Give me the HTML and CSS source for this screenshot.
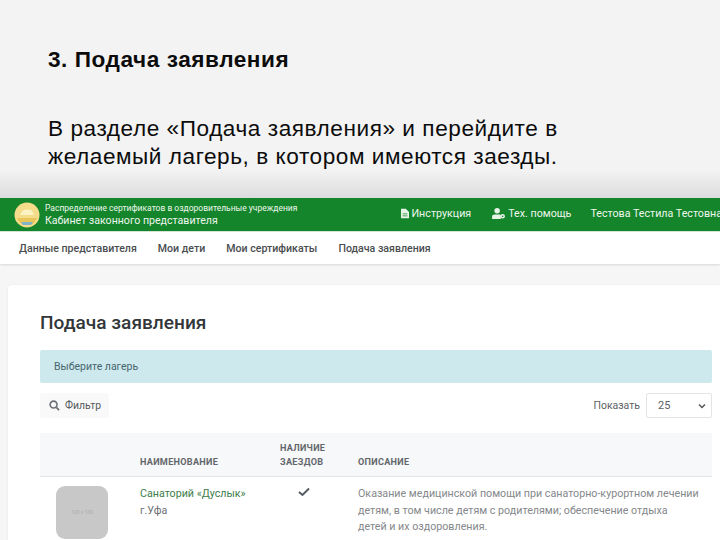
FILE: index.html
```html
<!DOCTYPE html>
<html lang="en">
<head>
  <meta charset="UTF-8">
  <title>Подача заявления</title>
  <link rel="stylesheet" href="styles.css">
</head>
<body>
  <div class="slide">
    <h1 class="slide-title">3. Подача заявления</h1>
    <p class="slide-text">В разделе «Подача заявления» и перейдите в<br>желаемый лагерь, в котором имеются заезды.</p>
  </div>
  <div class="shot">
    <div class="topbar">
      <div class="brand">
        <svg class="logo" viewBox="0 0 26 26">
          <circle cx="13" cy="13" r="12.5" fill="#f3dc8a"/>
          <path d="M6 13 Q10 6 14 8 Q17 6 20 13 Z" fill="#fbf3c4"/>
          <path d="M3 16 H23 Q21 21 17 23 H9 Q5 21 3 16 Z" fill="#e8c65a"/>
          <path d="M7 20 H19 L17 23 H9 Z" fill="#7fb3c9"/>
        </svg>
        <div>
          <div class="brand-sub">Распределение сертификатов в оздоровительные учреждения</div>
          <div class="brand-name">Кабинет законного представителя</div>
        </div>
      </div>
      <div class="top-links">
        <span class="top-link">
          <svg class="ico-doc" viewBox="0 0 10 12"><path d="M0 0 H6 L10 4 V12 H0 Z M2 6 V7 H8 V6 Z M2 8.5 V9.5 H8 V8.5 Z" fill="#e8f3e8" fill-rule="evenodd"/></svg>
          Инструкция
        </span>
        <span class="top-link">
          <svg class="ico-user" viewBox="0 0 14 12"><circle cx="5.5" cy="3" r="3" fill="#e8f3e8"/><path d="M0 12 V9.5 Q0 7 3 7 H8 Q9 7 9.5 7.5 V12 Z" fill="#e8f3e8"/><circle cx="11.5" cy="9" r="2.5" fill="#e8f3e8"/><circle cx="11.5" cy="9" r="0.9" fill="#14852a"/></svg>
          Тех. помощь
        </span>
        <span class="top-link user-name">Тестова Тестила Тестовна</span>
      </div>
    </div>
    <div class="navbar">
      <span>Данные представителя</span>
      <span>Мои дети</span>
      <span>Мои сертификаты</span>
      <span>Подача заявления</span>
    </div>
    <div class="content">
      <div class="card">
        <h2 class="card-title">Подача заявления</h2>
        <div class="alert">Выберите лагерь</div>
        <div class="toolbar">
          <span class="filter-btn">
            <svg class="ico-search" viewBox="0 0 12 12"><circle cx="5" cy="5" r="3.8" fill="none" stroke="#6b7176" stroke-width="1.7"/><path d="M8 8 L11 11" stroke="#6b7176" stroke-width="2"/></svg>
            Фильтр
          </span>
          <div class="page-size">
            <span>Показать</span>
            <span class="select">25
              <svg class="ico-chev" viewBox="0 0 8 6"><path d="M1 1.5 L4 4.5 L7 1.5" fill="none" stroke="#555" stroke-width="1.5"/></svg>
            </span>
          </div>
        </div>
        <div class="table">
          <div class="row head">
            <div class="c-img"></div>
            <div class="c-name">Наименование</div>
            <div class="c-has">Наличие<br>заездов</div>
            <div class="c-desc">Описание</div>
          </div>
          <div class="row">
            <div class="c-img"><div class="thumb">100 x 100</div></div>
            <div class="c-name"><span class="camp">Санаторий «Дуслык»</span><br>г.Уфа</div>
            <div class="c-has"><svg class="ico-check" viewBox="0 0 12 10"><path d="M1 5 L4.5 8 L11 1.5" fill="none" stroke="#555b60" stroke-width="2"/></svg></div>
            <div class="c-desc">Оказание медицинской помощи при санаторно-курортном лечении детям, в том числе детям с родителями; обеспечение отдыха<br>детей и их оздоровления.</div>
          </div>
        </div>
      </div>
    </div>
  </div>
</body>
</html>
```

FILE: styles.css
```css
html, body {
  margin: 0;
  height: 540px;
  overflow: hidden;
}
body {
  font-family: "Liberation Sans", Arial, sans-serif;
  background: #f3f3f3;
}
.slide {
  height: 198px;
  box-sizing: border-box;
  padding: 47px 48px 0;
  background: linear-gradient(to bottom, #f3f3f3 0, #f3f3f3 170px, #dcdcdc 198px);
  color: #0c0c0c;
  letter-spacing: 0.55px;
}
.slide-title {
  margin: 0;
  font-size: 22.6px;
  line-height: 26px;
  font-weight: bold;
}
.slide-text {
  margin: 42px 0 0;
  font-size: 22.6px;
  line-height: 28px;
  white-space: nowrap;
}

.shot {
  height: 342px;
  overflow: hidden;
  font-family: Roboto, "Liberation Sans", sans-serif;
}
.topbar {
  height: 34px;
  background: #14852a;
  border-bottom: 1px solid #d5e6d5;
  box-sizing: border-box;
  display: flex;
  align-items: center;
  justify-content: space-between;
  padding-left: 14px;
  color: #eef6ee;
  white-space: nowrap;
}
.brand {
  display: flex;
  align-items: center;
  gap: 5px;
}
.logo {
  width: 26px;
  height: 26px;
}
.brand-sub {
  font-size: 8.5px;
  line-height: 11px;
}
.brand-name {
  font-size: 10.6px;
  line-height: 13px;
}
.top-links {
  display: flex;
  gap: 21px;
  font-size: 10.7px;
  margin-right: -2px;
  margin-bottom: 2px;
}
.top-link {
  display: flex;
  align-items: center;
  gap: 3px;
}
.user-name {
  margin-left: -2px;
}
.ico-doc {
  width: 8px;
  height: 11px;
}
.ico-user {
  width: 13px;
  height: 11px;
}
.navbar {
  height: 32px;
  background: #fff;
  box-shadow: 0 1px 2px rgba(0, 0, 0, 0.12);
  display: flex;
  align-items: center;
  gap: 21px;
  padding-left: 19px;
  font-size: 10.6px;
  font-weight: 500;
  color: #4a4d50;
  white-space: nowrap;
  position: relative;
}
.content {
  background: #f6f6f6;
  padding: 21px 0 0 8px;
  height: 300px;
}
.card {
  background: #fff;
  border-radius: 4px 0 0 0;
  padding: 27px 8px 0 32px;
  height: 280px;
  box-shadow: 0 0 2px rgba(0, 0, 0, 0.08);
}
.card-title {
  margin: 0;
  font-size: 19.1px;
  line-height: 22px;
  font-weight: 500;
  color: #33373a;
}
.alert {
  margin-top: 16px;
  height: 33px;
  background: #cde9ee;
  border-radius: 2px;
  padding-left: 14px;
  display: flex;
  align-items: center;
  font-size: 10.5px;
  color: #47656d;
}
.toolbar {
  margin-top: 10px;
  display: flex;
  justify-content: space-between;
  align-items: center;
}
.filter-btn {
  height: 25px;
  width: 69px;
  box-sizing: border-box;
  background: #f9f9f9;
  border-radius: 3px;
  display: flex;
  align-items: center;
  gap: 5px;
  padding-left: 9px;
  font-size: 10.4px;
  color: #55595d;
}
.ico-search {
  width: 11px;
  height: 11px;
}
.page-size {
  display: flex;
  align-items: center;
  gap: 6px;
  font-size: 10.5px;
  color: #5c6064;
}
.select {
  width: 66px;
  height: 25px;
  box-sizing: border-box;
  border: 1px solid #e2e4e6;
  border-radius: 2px;
  padding: 0 5px 0 11px;
  display: flex;
  align-items: center;
  justify-content: space-between;
  font-size: 11px;
}
.ico-chev {
  width: 8px;
  height: 6px;
}
.table {
  margin-top: 15px;
}
.row {
  display: flex;
  font-size: 10.7px;
  line-height: 16.5px;
  color: #6d7073;
}
.row.head {
  height: 44px;
  box-sizing: border-box;
  background: #f7f8f9;
  border-bottom: 1px solid #e3e5e7;
  align-items: flex-end;
  padding-bottom: 7px;
  font-size: 9.1px;
  line-height: 14px;
  font-weight: 700;
  text-transform: uppercase;
  letter-spacing: 0.3px;
  color: #63676b;
}
.row .c-img {
  width: 100px;
  box-sizing: border-box;
  padding-left: 16px;
}
.row .c-name {
  width: 140px;
}
.row .c-has {
  width: 78px;
}
.row .c-desc {
  width: 354px;
}
.row:not(.head) > div {
  padding-top: 9px;
  box-sizing: border-box;
}
.row:not(.head) .c-name {
  font-size: 10.7px;
}
.row:not(.head) .c-desc {
  color: #85888b;
}
.row:not(.head) .c-has {
  padding-left: 18px;
}
.camp {
  color: #3c7d4c;
}
.thumb {
  width: 52px;
  height: 53px;
  border-radius: 9px;
  background: #c8c8c8;
  color: #adadad;
  font-size: 5px;
  display: flex;
  align-items: center;
  justify-content: center;
}
.ico-check {
  width: 12px;
  height: 10px;
}
```
